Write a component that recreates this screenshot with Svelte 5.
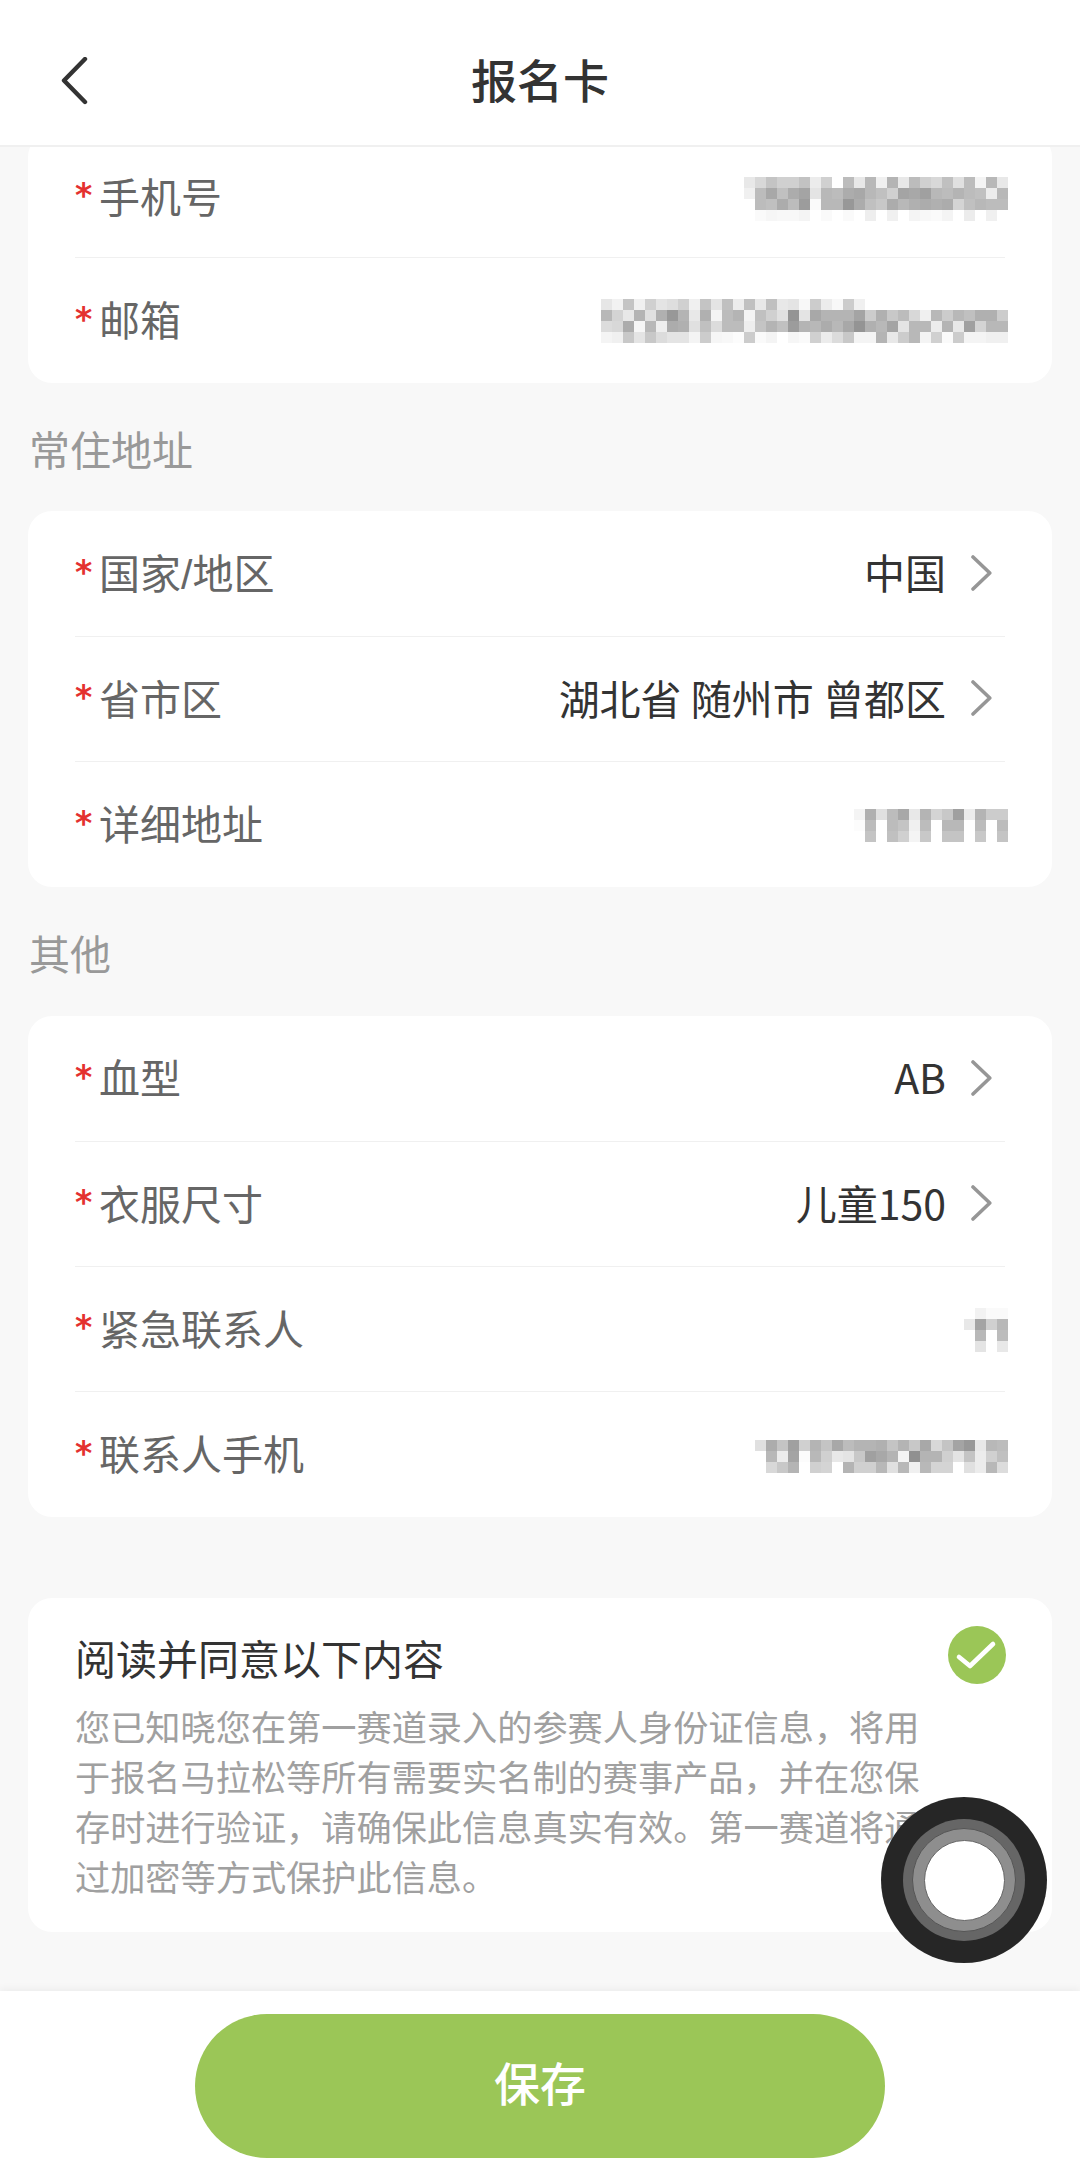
<script>
  const mosaics = {
    phone: ['e8d8c4d0d0c2ecd0ffbce8b8f0b4e8bcd0d8c0e0bcf4b8e8','f0bca8c0aca4e4b8bcaca8b8c0d0a4a8a0b8bcb4bcc0ecb8','ffbcc0acbc9cfab8b898acc0c8acb8b0acb0acd4c0b8bcbc','fffaf6f8f8f4fffafffaffeefff0fff4f8faf4ffecfff0ff'],
    email: ['e6f2c4f0d0e4ded0f0c4e4c0ecc0e8c0e8e4f8ccecf8ccf0ffffffffffffffffffffffffff','b8d4e8b4e0b098b4e8b0f4bcb4f4c0d0e094e4a8b4b4b4a4ccb0c8bcd8f0b8ccb8c0b0b0cc','dcd8acf6b8eeacb0e0c0dcbcbceec4b4c09cb4b8acb8a894b0b8a4e4b8b8ecb4e8a0d4b8b8','f4f0c8e4c8dce4e4f4ccf6f8fcccfaf4fff6fad0ecdcc8f4f4b4e8ccb8f4d0faccf4f4f0f0'],
    addr: ['f4b0e0bca8e8b4d4c8a0ecb4cccc','fcbcffbcc4f0bcffb8b8ffbcffbc','ffc4ffc0d0f4c8ffc4c4ffc8ffc4'],
    contact: ['fff2fafa','e8a4d0b8','ffb8ffbc','ffe4ffe8'],
    cphone: ['e0acc4a0d0b4c4a8bcb4b4b0c4b4c8a8d8c4a498e8b8bc','ffb8eca4fcb8d0e8e4c8a0a8b4f490b4b4d0e4c4ecd0c0','ffd8c8b4ffd0d4ffb4d0d0b8e0b8f0b8d4d4ffe0ecb8dc']
  };
  const cells = (rows) => rows.flatMap((r, y) => (r.match(/../g) ?? []).map((v, x) => ({ x, y, fill: '#' + v + v + v })));
  const size = (rows) => ({ w: rows[0].length / 2 * 11, h: rows.length * 11 });

  const card1 = [
    { label: '手机号', blur: 'phone', dy: 2 },
    { label: '邮箱', blur: 'email', dy: 0 }
  ];
  const card2 = [
    { label: '国家/地区', value: '中国' },
    { label: '省市区', value: '湖北省 随州市 曾都区' },
    { label: '详细地址', blur: 'addr', dy: 1 }
  ];
  const card3 = [
    { label: '血型', value: 'AB' },
    { label: '衣服尺寸', value: '儿童150' },
    { label: '紧急联系人', blur: 'contact', dy: 1 },
    { label: '联系人手机', blur: 'cphone', dy: 2 }
  ];
</script>

{#snippet rowList(items)}
  {#each items as item}
    <div class="row">
      <span class="star">*</span>
      <span class="label">{item.label}</span>
      {#if item.blur}
        {@const s = size(mosaics[item.blur])}
        <svg class="mosaic" style="margin-top: {item.dy * 2}px" width={s.w} height={s.h} viewBox="0 0 {s.w} {s.h}" shape-rendering="crispEdges">
          {#each cells(mosaics[item.blur]) as c}
            <rect x={c.x * 11} y={c.y * 11} width="11" height="11" fill={c.fill} />
          {/each}
        </svg>
      {:else}
        <span class="value">{item.value}</span>
        <svg class="chev" width="24" height="36" viewBox="0 0 24 36"><path d="M4 2 L20.8 18 L4 34" fill="none" stroke="#969696" stroke-width="3.6" stroke-linecap="round" stroke-linejoin="round" /></svg>
      {/if}
    </div>
  {/each}
{/snippet}

<div class="page">
  <header class="top">
    <svg class="back" width="28" height="48" viewBox="0 0 28 48"><path d="M24 2 L3 23.5 L24 45" fill="none" stroke="#333" stroke-width="4.4" stroke-linecap="round" stroke-linejoin="round" /></svg>
    <h1>报名卡</h1>
  </header>

  <main class="scroll">
    <section class="card first">{@render rowList(card1)}</section>
    <h2>常住地址</h2>
    <section class="card">{@render rowList(card2)}</section>
    <h2 class="other">其他</h2>
    <section class="card">{@render rowList(card3)}</section>

    <section class="card agree">
      <div class="agree-head">
        <span class="agree-title">阅读并同意以下内容</span>
        <svg class="tick" width="58" height="58" viewBox="0 0 58 58"><circle cx="29" cy="29" r="29" fill="#9bc657" /><path d="M11 31 L22 40 L45 18" fill="none" stroke="#fff" stroke-width="4.6" stroke-linecap="round" stroke-linejoin="round" /></svg>
      </div>
      <p>您已知晓您在第一赛道录入的参赛人身份证信息，将用于报名马拉松等所有需要实名制的赛事产品，并在您保存时进行验证，请确保此信息真实有效。第一赛道将通过加密等方式保护此信息。</p>
    </section>
  </main>

  <footer class="bottom">
    <button class="save">保存</button>
  </footer>

  <div class="touch"><div class="r1"><div class="r2"><div class="r3"></div></div></div></div>
</div>

<style>
  :global(body) { margin: 0; background: #f8f8f8; }
  .page {
    position: relative;
    width: 1080px;
    height: 2175px;
    overflow: hidden;
    display: flex;
    flex-direction: column;
    background: #f8f8f8;
    font-family: "Noto Sans CJK SC", "Noto Sans", sans-serif;
  }
  .top {
    position: relative;
    z-index: 2;
    flex: none;
    height: 145px;
    background: #fff;
    border-bottom: 2px solid #f0f0f0;
    display: flex;
    align-items: center;
    justify-content: center;
  }
  .back { position: absolute; left: 61px; top: 57px; }
  h1 {
    margin: 10px 0 0;
    font-size: 46px;
    font-weight: 500;
    color: #333;
    line-height: 66px;
  }
  .scroll {
    flex: 1;
    min-height: 0;
    padding: 0 28px;
    overflow: hidden;
  }
  .card {
    background: #fff;
    border-radius: 24px;
    padding: 0 47px;
  }
  .first { margin-top: -14px; }
  h2 {
    margin: 0;
    height: 128px;
    line-height: 130px;
    font-size: 41px;
    font-weight: 400;
    color: #999;
    padding-left: 1px;
  }
  h2.other { height: 129px; }
  .row {
    height: 125px;
    box-sizing: border-box;
    display: flex;
    align-items: center;
    border-bottom: 1px solid #f0f0f0;
  }
  .row:first-child { height: 126px; }
  .row:last-child { border-bottom: none; }
  .first .row:first-child { height: 125px; padding-top: 4px; }
  .star {
    flex: none;
    width: 24px;
    box-sizing: border-box;
    color: #e4312f;
    font-family: "DejaVu Sans", sans-serif;
    font-weight: 700;
    font-size: 33px;
    line-height: 32px;
    height: 32px;
    margin-bottom: 2px;
  }
  .label {
    font-family: "Liberation Sans", "Noto Sans CJK SC", sans-serif;
    font-size: 41px;
    color: #666;
    flex: 1;
    line-height: 56px;
    margin-bottom: -3px;
  }
  .value { font-size: 41px; color: #333; line-height: 56px; margin-bottom: 5px; }
  .chev { flex: none; margin-left: 23px; margin-right: 12px; margin-bottom: 2px; }
  .mosaic { flex: none; margin-right: -3px; }
  .agree { margin-top: 81px; padding: 28px 46px 0 47px; height: 334px; box-sizing: border-box; }
  .agree-head { display: flex; justify-content: space-between; align-items: flex-start; height: 75px; }
  .agree-title { font-size: 41px; color: #333; line-height: 58px; margin-top: 2px; }
  p {
    margin: 0;
    width: 850px;
    font-size: 35.2px;
    line-height: 50px;
    color: #a0a0a0;
  }
  .bottom {
    position: relative;
    z-index: 1;
    flex: none;
    height: 184px;
    background: #fff;
    box-shadow: 0 -2px 8px rgba(0, 0, 0, 0.05);
    display: flex;
    justify-content: center;
    padding-top: 23px;
    box-sizing: border-box;
  }
  .save {
    width: 690px;
    height: 144px;
    border: none;
    border-radius: 72px;
    background: #9bc657;
    color: #fff;
    font-family: inherit;
    font-size: 46px;
    font-weight: 500;
    padding: 0 0 10px;
  }
  .touch {
    position: absolute;
    z-index: 3;
    left: 881px;
    top: 1797px;
    width: 166px;
    height: 166px;
    border-radius: 50%;
    background: #262626;
    display: flex;
    align-items: center;
    justify-content: center;
  }
  .r1 { width: 122px; height: 122px; border-radius: 50%; background: #666; display: flex; align-items: center; justify-content: center; }
  .r2 { width: 104px; height: 104px; border-radius: 50%; background: #8e8e8e; border: 1px solid #555; box-sizing: border-box; display: flex; align-items: center; justify-content: center; }
  .r3 { width: 81px; height: 81px; border-radius: 50%; background: #fff; border: 1px solid #666; box-sizing: border-box; }
</style>
